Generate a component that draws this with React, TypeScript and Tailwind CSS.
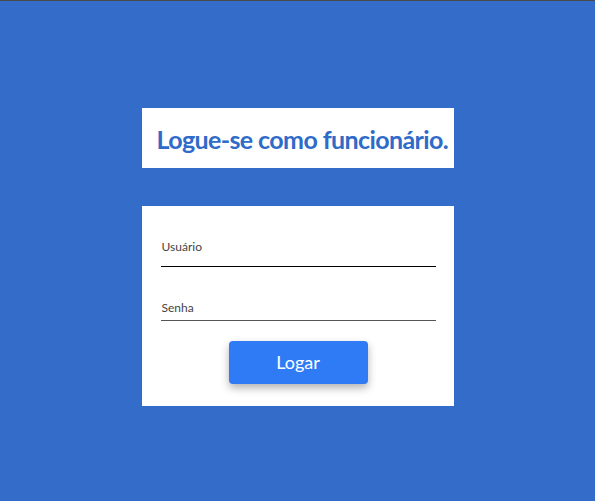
import React from 'react';

export default function App() {
  return (
    <div className="w-[595px] h-[501px] bg-[#336cc9] border-t border-[#4a4a4a] flex flex-col items-center font-['Lato','Liberation_Sans',sans-serif]">
      {/* Title */}
      <div className="mt-[107px] w-[312px] h-[60px] bg-white flex items-center pl-[15px] pt-[3px]">
        <h1 className="whitespace-nowrap text-[25px] font-bold text-[#2f6bc8] tracking-[-0.6px]">Logue-se como funcionário.</h1>
      </div>

      {/* Form */}
      <div className="mt-[38px] w-[312px] h-[200px] bg-white px-[19px] flex flex-col">
        <label className="mt-[33px] ml-[1px] text-[12px] text-[#444] leading-[16px]">Usuário</label>
        <div className="mt-[11px] h-px w-[275px] bg-black" />
        <label className="mt-[33px] ml-[1px] text-[12px] text-[#444] leading-[16px]">Senha</label>
        <div className="mt-[4px] h-px w-[275px] bg-[#555]" />
        <button className="mt-[20px] ml-[68px] w-[139px] h-[43px] rounded-[4px] bg-[#2f7bf5] text-white text-[18px] shadow-[0_4px_8px_rgba(0,0,0,0.3)]">
          Logar
        </button>
      </div>
    </div>
  );
}
